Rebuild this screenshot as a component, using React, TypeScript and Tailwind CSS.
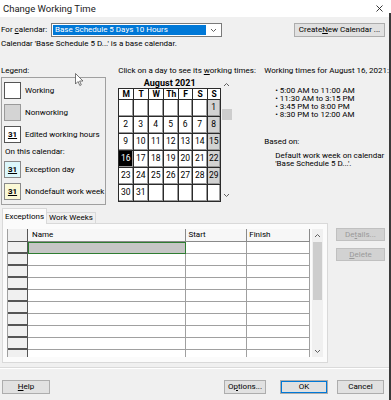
import React from "react";

const U = ({ children }: { children: React.ReactNode }) => <span className="underline">{children}</span>;

function ChevUp() {
  return (
    <svg width="7" height="5" viewBox="0 0 7 5">
      <polyline points="1,4 3.5,1.5 6,4" fill="none" stroke="#606060" strokeWidth="1" />
    </svg>
  );
}
function ChevDown() {
  return (
    <svg width="7" height="5" viewBox="0 0 7 5">
      <polyline points="1,1 3.5,3.5 6,1" fill="none" stroke="#606060" strokeWidth="1" />
    </svg>
  );
}

function Swatch({ bg, border, label }: { bg: string; border: string; label?: boolean }) {
  return (
    <div className={`w-[17px] h-[17px] border ${border} ${bg} flex items-center justify-center`}>
      {label ? <span className="text-[8px] font-bold underline leading-none">31</span> : null}
    </div>
  );
}

const days: (number | null)[][] = [
  [null, null, null, null, null, null, 1],
  [2, 3, 4, 5, 6, 7, 8],
  [9, 10, 11, 12, 13, 14, 15],
  [16, 17, 18, 19, 20, 21, 22],
  [23, 24, 25, 26, 27, 28, 29],
  [30, 31, null, null, null, null, null],
];

function Btn({ children, className = "" }: { children: React.ReactNode; className?: string }) {
  return (
    <div className={`h-[14px] flex items-center justify-center bg-[#e1e1e1] border border-[#adadad] text-[8px] leading-none ${className}`}>
      {children}
    </div>
  );
}

export default function App() {
  const rows = Array.from({ length: 10 });
  return (
    <div className="w-[391px] h-[400px] overflow-hidden relative flex bg-[#f0f0f0] font-['Roboto',sans-serif] text-black">
      <div className="w-[389px] h-[400px] flex flex-col text-[8px] leading-[8px]">
        {/* Title bar */}
        <div className="h-[17px] bg-white flex items-center justify-between pl-[3px] pr-[6px]">
          <span className="text-[9.5px] leading-none text-[#1a1a1a]">Change Working Time</span>
          <svg width="7" height="7" viewBox="0 0 7 7">
            <line x1="0.5" y1="0.5" x2="6.5" y2="6.5" stroke="#222" strokeWidth="0.9" />
            <line x1="6.5" y1="0.5" x2="0.5" y2="6.5" stroke="#222" strokeWidth="0.9" />
          </svg>
        </div>

        {/* For calendar row */}
        <div className="mt-[6px] h-[14px] flex items-center">
          <div className="w-[51px] pl-[1px]">
            For <U>c</U>alendar:
          </div>
          <div className="w-[171px] h-[14px] border border-[#7a7a7a] bg-white flex p-[1px]">
            <div className="flex-1 bg-[#0078d7] text-white flex items-center pl-[2px]">Base Schedule 5 Days 10 Hours</div>
            <div className="w-[14px] flex items-center justify-center">
              <ChevDown />
            </div>
          </div>
          <Btn className="ml-auto mr-[4px] w-[91px]">
            Create <U>N</U>ew Calendar ...
          </Btn>
        </div>

        <div className="mt-[3px] h-[8px] pl-[1px]">Calendar 'Base Schedule 5 D...' is a base calendar.</div>

        {/* Main area */}
        <div className="mt-[19px] flex">
          {/* Legend */}
          <div className="w-[107px] pl-[1px] flex flex-col">
            <div className="h-[8px]">Legend:</div>
            <div className="mt-[2px] h-[128px] border border-[#a0a0a0] pl-[2px] pt-[4px] flex flex-col gap-[5px]">
              <div className="flex items-center gap-[4px] h-[17px]">
                <Swatch bg="bg-white" border="border-[#555]" />
                <span>Working</span>
              </div>
              <div className="flex items-center gap-[4px] h-[17px]">
                <Swatch bg="bg-[#d4d4d4]" border="border-[#9a9a9a]" />
                <span>Nonworking</span>
              </div>
              <div className="flex items-center gap-[4px] h-[17px]">
                <Swatch bg="bg-white" border="border-[#555]" label />
                <span>Edited working hours</span>
              </div>
              <div className="h-[8px] ml-[1px]">On this calendar:</div>
              <div className="flex items-center gap-[4px] h-[17px]">
                <Swatch bg="bg-[#dcf7fb]" border="border-[#8a8a8a]" label />
                <span>Exception day</span>
              </div>
              <div className="flex items-center gap-[4px] h-[17px]">
                <Swatch bg="bg-[#fbf9d6]" border="border-[#8a8a8a]" label />
                <span>Nondefault work week</span>
              </div>
            </div>
          </div>

          {/* Calendar */}
          <div className="ml-[12px] w-[114px] flex flex-col">
            <div className="h-[8px] whitespace-nowrap">
              Click on a day to see its <U>w</U>orking times:
            </div>
            <div className="mt-[4px] flex">
              <div className="w-[103px] flex flex-col">
                <div className="h-[8px] text-center font-bold text-[9px] leading-[8px]">August 2021</div>
                <div className="mt-[1px] grid grid-cols-[14px_14px_14px_14px_13px_14px_12px] gap-px bg-[#2a2a2a] border border-[#2a2a2a]">
                  {["M", "T", "W", "Th", "F", "S", "S"].map((d, i) => (
                    <div key={i} className="h-[10px] bg-white flex items-center justify-center font-bold text-[8.5px] leading-none">
                      {d}
                    </div>
                  ))}
                  {days.flat().map((d, i) => {
                    const sun = i % 7 === 6 && d !== null;
                    const sel = d === 16;
                    const cls = sel ? "bg-black text-white" : sun ? "bg-[#d2d2d2]" : "bg-white";
                    return (
                      <div
                        key={i}
                        className={`h-[16px] flex items-center justify-center text-[8.5px] leading-none border-r border-b border-[#9a9a9a] ${cls}`}
                      >
                        {d ?? ""}
                      </div>
                    );
                  })}
                </div>
              </div>
              <div className="w-[11px] flex flex-col items-center">
                <div className="h-[8px] flex items-center justify-center mt-[1px]">
                  <ChevUp />
                </div>
                <div className="mt-[21px] w-[10px] h-[11px] bg-[#cdcdcd]" />
                <div className="mt-auto mb-[4px]">
                  <ChevDown />
                </div>
              </div>
            </div>
          </div>

          {/* Working times */}
          <div className="ml-[32px] flex flex-col whitespace-nowrap">
            <div className="h-[8px]">Working times for August 16, 2021:</div>
            <div className="mt-[12px] pl-[11px] flex flex-col">
              <div className="h-[8px]">• 5:00 AM to 11:00 AM</div>
              <div className="h-[8px]">• 11:30 AM to 3:15 PM</div>
              <div className="h-[8px]">• 3:45 PM to 8:00 PM</div>
              <div className="h-[8px]">• 8:30 PM to 12:00 AM</div>
            </div>
            <div className="mt-[19px] h-[8px]">Based on:</div>
            <div className="mt-[6px] pl-[11px] flex flex-col">
              <div className="h-[8px]">Default work week on calendar</div>
              <div className="h-[8px]">'Base Schedule 5 D...'.</div>
            </div>
          </div>
        </div>

        {/* Tabs + table */}
        <div className="mt-[3px] flex">
          <div className="flex flex-col">
            <div className="h-[15px] flex items-end">
              <div className="relative z-10 -mb-px ml-[2px] w-[45px] h-[16px] bg-[#fbfbfb] border border-b-0 border-[#d9d9d9] flex items-center justify-center">
                Exceptions
              </div>
              <div className="w-[49px] h-[11px] bg-[#f0f0f0] border border-l-0 border-b-0 border-[#d9d9d9] flex items-center justify-center">
                Work Weeks
              </div>
            </div>
            <div className="ml-[2px] w-[326px] h-[140px] bg-[#fbfbfb] border border-[#d9d9d9] pl-[4px] pt-[5px] flex">
              <div className="w-[303px] h-[128px] overflow-hidden flex flex-col border-l border-[#a0a0a0] bg-white">
                {/* header */}
                <div className="flex h-[13px] shrink-0">
                  <div className="w-[20px] bg-[#f0f0f0] border-r border-b border-[#555]" />
                  <div className="w-[159px] bg-[#f7f7f7] border-r border-b border-[#8a8a8a] pl-[4px] flex items-center">Name</div>
                  <div className="w-[61px] bg-[#f7f7f7] border-r border-b border-[#8a8a8a] pl-[2px] flex items-center">Start</div>
                  <div className="w-[63px] bg-[#f7f7f7] border-r border-b border-[#8a8a8a] pl-[2px] flex items-center">Finish</div>
                </div>
                {rows.map((_, i) => (
                  <div key={i} className="flex h-[12px] shrink-0">
                    <div className="w-[20px] bg-[#f0f0f0] border-r border-b-2 border-[#555]" />
                    {i === 0 ? (
                      <div className="w-[159px] bg-[#c6c6c6] border border-[#2e7d32]" />
                    ) : (
                      <div className="w-[159px] border-r border-b border-[#a0a0a0]" />
                    )}
                    <div className="w-[61px] border-r border-b border-[#a0a0a0]" />
                    <div className="w-[63px] border-r border-b border-[#a0a0a0]" />
                  </div>
                ))}
              </div>
              <div className="ml-[2px] w-[11px] h-[128px] bg-[#f0f0f0] flex flex-col items-center">
                <div className="h-[13px] flex items-center justify-center">
                  <ChevUp />
                </div>
                <div className="w-[9px] h-[58px] bg-[#cdcdcd]" />
                <div className="mt-auto mb-[3px]">
                  <ChevDown />
                </div>
              </div>
            </div>
          </div>
          <div className="ml-[8px] mt-[20px] flex flex-col gap-[7px]">
            <div className="w-[49px] h-[13px] flex items-center justify-center bg-[#d2d2d2] border border-[#c0c0c0] text-[#9a9a9a]">
              De<U>t</U>ails...
            </div>
            <div className="w-[49px] h-[13px] flex items-center justify-center bg-[#d2d2d2] border border-[#c0c0c0] text-[#9a9a9a]">
              <U>D</U>elete
            </div>
          </div>
        </div>

        {/* separator */}
        <div className="mt-[4px] h-[2px] border-t border-[#dadada] border-b border-b-white" />

        {/* Buttons */}
        <div className="mt-[11px] h-[14px] flex items-center">
          <Btn className="ml-[2px] w-[48px]">
            <U>H</U>elp
          </Btn>
          <Btn className="ml-auto w-[42px]">
            O<U>p</U>tions...
          </Btn>
          <Btn className="ml-[14px] w-[48px] border-[#0078d7] shadow-[inset_0_0_0_1px_#0078d7]">OK</Btn>
          <Btn className="ml-[9px] mr-[5px] w-[47px]">Cancel</Btn>
        </div>
      </div>

      {/* background window edge */}
      <div className="w-[2px] h-[400px] flex flex-col">
        <div className="h-[13px] bg-white" />
        <div className="flex-1 bg-[#3a3a3a]" />
      </div>

      {/* mouse cursor */}
      <svg className="absolute left-[75px] top-[73px]" width="9" height="14" viewBox="0 0 9 14">
        <path d="M0.5,0.5 L0.5,11 L3,8.5 L4.8,12.5 L6.3,11.8 L4.6,8 L8,8 Z" fill="white" stroke="#555" strokeWidth="0.8" />
      </svg>
    </div>
  );
}
